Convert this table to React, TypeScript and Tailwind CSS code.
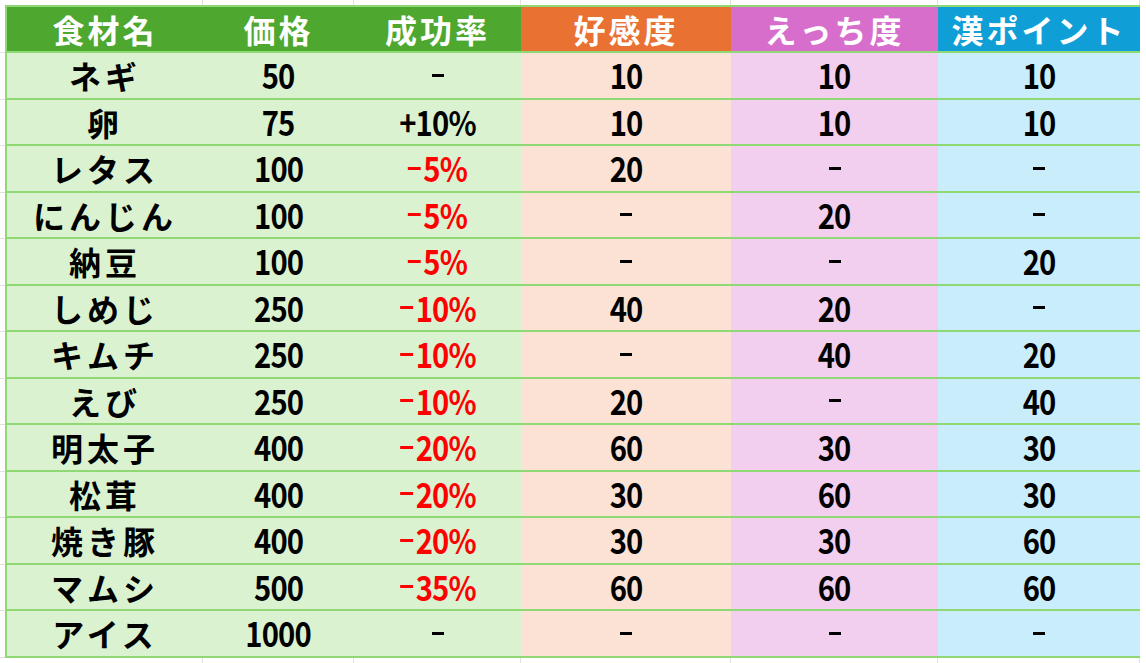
const JP = { fontFamily: '"Noto Sans CJK JP", "Noto Sans", sans-serif' };

type Cell = string;

const ROWS: Cell[][] = [
  ['ネギ', '50', '-', '10', '10', '10'],
  ['卵', '75', '+10%', '10', '10', '10'],
  ['レタス', '100', '-5%', '20', '-', '-'],
  ['にんじん', '100', '-5%', '-', '20', '-'],
  ['納豆', '100', '-5%', '-', '-', '20'],
  ['しめじ', '250', '-10%', '40', '20', '-'],
  ['キムチ', '250', '-10%', '-', '40', '20'],
  ['えび', '250', '-10%', '20', '-', '40'],
  ['明太子', '400', '-20%', '60', '30', '30'],
  ['松茸', '400', '-20%', '30', '60', '30'],
  ['焼き豚', '400', '-20%', '30', '30', '60'],
  ['マムシ', '500', '-35%', '60', '60', '60'],
  ['アイス', '1000', '-', '-', '-', '-'],
];

const HEAD = [
  { label: '食材名', bg: 'bg-[#4ea72e]' },
  { label: '価格', bg: 'bg-[#4ea72e]' },
  { label: '成功率', bg: 'bg-[#4ea72e]' },
  { label: '好感度', bg: 'bg-[#e97132]' },
  { label: 'えっち度', bg: 'bg-[#d86ecc]' },
  { label: '漢ポイント', bg: 'bg-[#0f9ed5]' },
];

const WIDTHS = ['w-[196px]', 'w-[151px]', 'w-[167px]', 'w-[210px]', 'w-[207px]', 'w-[202px]'];
const BODY_BG = ['bg-[#daf2d0]', 'bg-[#daf2d0]', 'bg-[#daf2d0]', 'bg-[#fbe2d5]', 'bg-[#f2ceef]', 'bg-[#caedfb]'];

function Gutter() {
  return <div className="w-[5px] shrink-0 border-b border-[#e1e1e1]" />;
}

function EdgeStrip({ h }: { h: string }) {
  return (
    <div className={`flex ${h}`}>
      <div className="w-[5px]" />
      <div className="w-[2px]" />
      {WIDTHS.map((w, i) => (
        <div key={i} className={`${w} border-r border-[#e1e1e1]`} />
      ))}
    </div>
  );
}

// narrow digits like the sheet's font
function Num({ v }: { v: string }) {
  if (v === '-') return <span className="inline-block w-[12px] h-[3px] bg-current" />;
  const minus = v.startsWith('-');
  const rest = minus ? v.slice(1) : v;
  return (
    <span className="inline-flex items-center origin-center scale-x-[0.86]">
      {minus && <span className="inline-block w-[15px] h-[3px] bg-current mr-[3px]" />}
      <span className="text-[34px] font-bold leading-none tracking-[-1px]">{rest}</span>
    </span>
  );
}

export default function App() {
  return (
    <div className="w-[1146px] h-[663px] bg-white overflow-hidden" style={JP}>
      <EdgeStrip h="h-[5px]" />

      {/* header */}
      <div className="flex h-[48px]">
        <Gutter />
        <div className="flex border-t-2 border-b-2 border-l-2 border-[#8ed973]">
          {HEAD.map((c, i) => (
            <div key={c.label} className={`${WIDTHS[i]} ${c.bg} flex items-center justify-center text-white font-bold text-[32px] tracking-[3px] leading-none`}>
              {c.label}
            </div>
          ))}
        </div>
      </div>

      {ROWS.map((r, ri) => (
        <div key={ri} className="flex h-[46.5px]">
          <Gutter />
          <div className="flex border-b-2 border-l-2 border-[#8ed973]">
            {r.map((v, i) => {
              const red = i === 2 && v.startsWith('-') && v.length > 1;
              return (
                <div
                  key={i}
                  className={`${WIDTHS[i]} ${BODY_BG[i]} flex items-center justify-center ${red ? 'text-[#ff0000]' : 'text-black'}`}
                >
                  {i === 0 ? (
                    <span className="text-[32px] font-bold leading-none tracking-[4px]">{v}</span>
                  ) : (
                    <Num v={v} />
                  )}
                </div>
              );
            })}
          </div>
        </div>
      ))}

      <EdgeStrip h="h-[6px]" />
    </div>
  );
}
